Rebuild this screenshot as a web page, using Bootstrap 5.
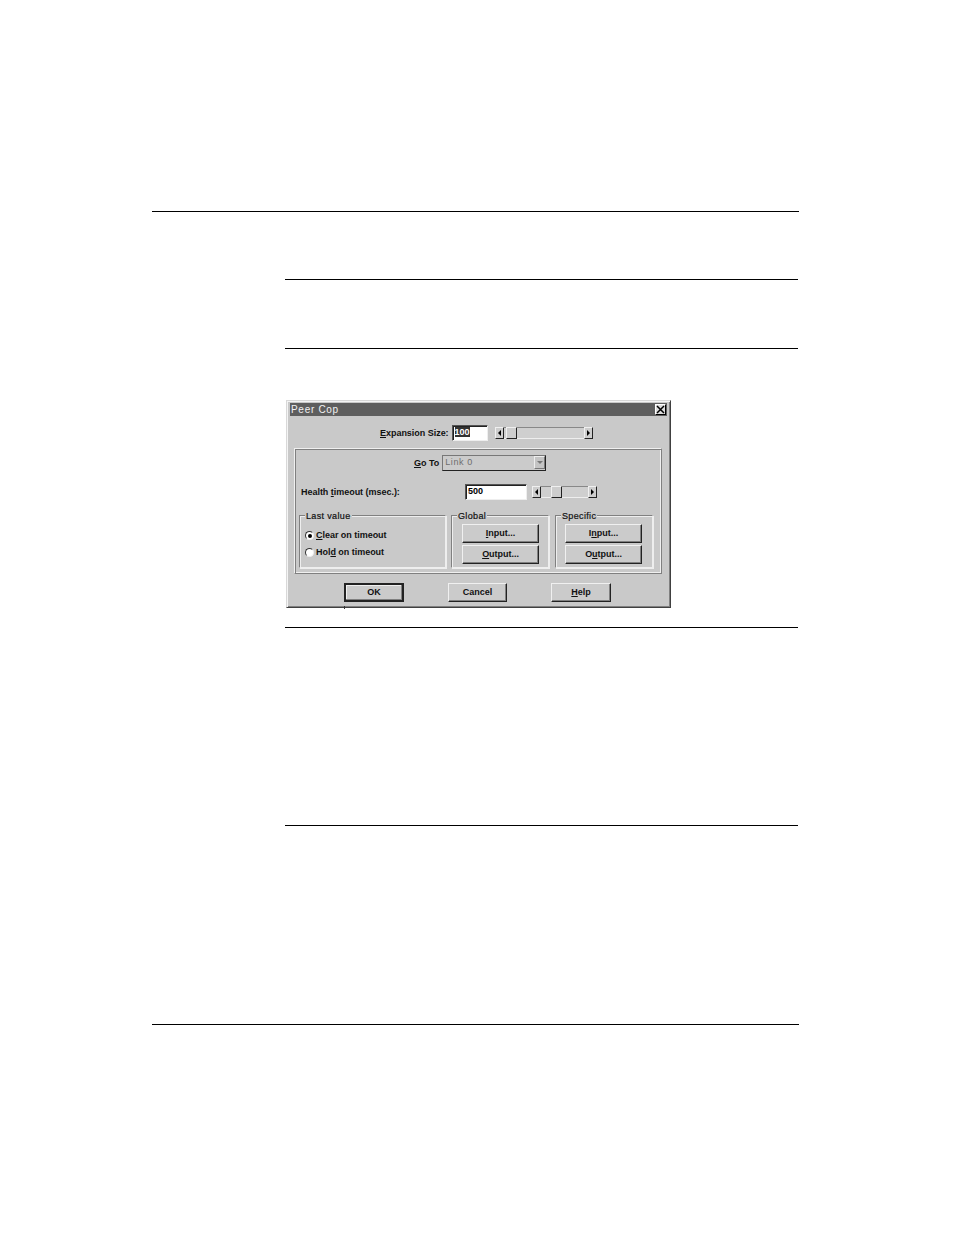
<!DOCTYPE html>
<html lang="en">
<head>
<meta charset="utf-8">
<title>Peer Cop</title>
<link href="https://cdn.jsdelivr.net/npm/bootstrap@5.3.0/dist/css/bootstrap.min.css" rel="stylesheet">
<style>
body{background:#fff;margin:0}
.sheet{padding:211px 155px 0 152px;height:1235px;overflow:hidden}
.rule-wide{border-top:1px solid #000}
.rule-in{border-top:1px solid #000;height:1px}
.col-area{margin-left:133px;margin-right:1px}
.gap-a{margin-top:67px}.gap-b{margin-top:68px}.gap-c{margin-top:19px}.gap-d{margin-top:197px}.gap-e{margin-top:198px}
.dlg{position:relative;width:385px;height:208px;margin:51px 0 0 1px;background:#c9c9c9;border:1px solid;border-color:#d8d8d8 #404040 #404040 #d8d8d8;box-shadow:inset 1px 1px 0 #f4f4f4,inset -1px -1px 0 #808080;padding:2px 3px 3px;font-family:"Liberation Sans",Arial,sans-serif;font-size:9px;font-weight:700;color:#111;letter-spacing:-.03px;line-height:12px}
.tick{position:absolute;left:57px;top:205px;width:1px;height:3px;background:#333}
.ttl{height:13px;background:#5e5e5e;color:#f2f2f2;font-size:10px;font-weight:400;letter-spacing:.7px;padding-left:1px;line-height:13px}
.xbtn{width:11px;height:11px;margin:1px 1px 0 0;background:#ddd;border:1px solid;border-color:#fff #000 #000 #fff}
.xbtn svg{display:block}
.row-exp{height:32px;padding:9px 0 0 90px}
.lbl{padding-top:2px}
.lbl u{text-underline-offset:1px}
.sunken{background:#fff;border:1px solid;border-color:#555 #eee #eee #555;box-shadow:inset 1px 1px 0 #222;color:#000;line-height:12px;padding:0 0 0 2px}
.f-exp{width:36px;height:16px;margin-left:3px}
.f-exp span{background:#333;color:#fff}
.sbar{display:flex;height:12px;background:#cfcfcf;border-top:1px solid #888;border-bottom:1px solid #eee}
.sb-e{width:98px;margin:2px 0 0 7px}
.sb-h{width:65px;margin:2px 0 0 5px}
.arr,.thb{display:flex;align-items:center;justify-content:center;background:#cdcdcd;border:1px solid;border-color:#f0f0f0 #222 #222 #f0f0f0;height:12px;margin-top:-1px;flex:none}
.arr{width:9px}
.thb{width:11px}
.tri-l{width:0;height:0;border:3px solid transparent;border-left:0;border-right:3px solid #000}
.tri-r{width:0;height:0;border:3px solid transparent;border-right:0;border-left:3px solid #000}
.tri-d{width:0;height:0;border:3px solid transparent;border-bottom:0;border-top:3px solid #777}
.sp-e{width:2px}
.sp-h{width:10px}
.panel{margin:0 5px 0 4px;height:126px;border:1px solid;border-color:#f0f0f0 #808080 #808080 #f0f0f0;box-shadow:inset 1px 1px 0 #808080,inset -1px -1px 0 #f0f0f0;padding:0 4px 0 4px}
.row-go{height:30px;padding:6px 0 0 115px}
.combo{width:104px;height:16px;margin-left:3px;background:#cbcbcb;border:1px solid;border-color:#777 #222 #222 #777;color:#6e6e6e;font-weight:400;padding-left:2px;line-height:13px;letter-spacing:.6px}
.combo .dd{width:11px;height:13px;background:#c4c4c4;border:1px solid;border-color:#eee #777 #777 #eee}
.row-hl{height:30px;padding:5px 0 0 2px}
.row-hl .lbl{width:164px}
.f-hl{width:62px;height:16px}
.grp-wrap{gap:5px;margin-top:6px}
.grp{position:relative;height:53px;border:1px solid;border-color:#808080 #eee #eee #808080;box-shadow:1px 1px 0 #eee,inset 1px 1px 0 #eee}
.grp-a{width:147px;padding:11px 0 0 5px}
.grp-b{width:98px;padding:8px 0 0 10px}
.grp-c{width:98px;padding:8px 0 0 9px;margin-left:1px}
.cap{position:absolute;left:5px;top:-6px;background:#c9c9c9;padding:0 1px;font-weight:400;letter-spacing:.35px;-webkit-text-stroke:.2px #111}
.radio-ln{height:17px;line-height:13px}
.rdo{width:9px;height:9px;border-radius:50%;background:#fff;border:1px solid;border-color:#333 #eee #eee #333;margin-right:2px;display:flex;align-items:center;justify-content:center}
.rdo i{width:4px;height:4px;border-radius:50%;background:#000;display:block}
.wbtn{display:flex;align-items:center;justify-content:center;background:#cbcbcb;border:1px solid;border-color:#f0f0f0 #222 #222 #f0f0f0;box-shadow:inset -1px -1px 0 #808080;color:#111;padding:0 0 2px}
.b-g{width:77px;height:19px;margin-bottom:2px}
.foot{padding:9px 0 0 54px;gap:44px}
.b-f{width:60px;height:19px}
.b-n{width:59px}
.b-d{border:2px solid;border-color:#222;box-shadow:inset -1px -1px 0 #808080,inset 1px 1px 0 #f0f0f0}
</style>
</head>
<body>
<div class="sheet">
  <div class="rule-wide"></div>
  <div class="col-area">
    <div class="rule-in gap-a"></div>
    <div class="rule-in gap-b"></div>
    <div class="dlg">
      <div class="ttl d-flex justify-content-between"><span>Peer Cop</span>
        <span class="xbtn"><svg width="9" height="9" viewBox="0 0 9 9"><path d="M1 1l7 7M8 1l-7 7" stroke="#000" stroke-width="1.5"/></svg></span></div>
      <div class="row-exp d-flex align-items-start">
        <span class="lbl"><u>E</u>xpansion Size:</span>
        <div class="sunken f-exp"><span>100</span></div>
        <div class="sbar sb-e"><div class="arr"><i class="tri-l"></i></div><div class="sp-e"></div><div class="thb"></div><div class="flex-grow-1"></div><div class="arr"><i class="tri-r"></i></div></div>
      </div>
      <div class="panel">
        <div class="row-go d-flex align-items-start">
          <span class="lbl"><u>G</u>o To</span>
          <div class="combo d-flex justify-content-between"><span>Link 0</span><span class="dd d-flex align-items-center justify-content-center"><i class="tri-d"></i></span></div>
        </div>
        <div class="row-hl d-flex align-items-start">
          <span class="lbl">Health <u>t</u>imeout (msec.):</span>
          <div class="sunken f-hl">500</div>
          <div class="sbar sb-h"><div class="arr"><i class="tri-l"></i></div><div class="sp-h"></div><div class="thb"></div><div class="flex-grow-1"></div><div class="arr"><i class="tri-r"></i></div></div>
        </div>
        <div class="grp-wrap d-flex">
          <div class="grp grp-a">
            <span class="cap">Last value</span>
            <div class="radio-ln d-flex align-items-center"><span class="rdo"><i></i></span><span><u>C</u>lear on timeout</span></div>
            <div class="radio-ln d-flex align-items-center"><span class="rdo"></span><span>Hol<u>d</u> on timeout</span></div>
          </div>
          <div class="grp grp-b">
            <span class="cap">Global</span>
            <div class="wbtn b-g"><span><u>I</u>nput...</span></div>
            <div class="wbtn b-g"><span><u>O</u>utput...</span></div>
          </div>
          <div class="grp grp-c">
            <span class="cap">Specific</span>
            <div class="wbtn b-g"><span>I<u>n</u>put...</span></div>
            <div class="wbtn b-g"><span>O<u>u</u>tput...</span></div>
          </div>
        </div>
      </div>
      <div class="foot d-flex">
        <div class="wbtn b-f b-d">OK</div>
        <div class="wbtn b-f b-n">Cancel</div>
        <div class="wbtn b-f"><span><u>H</u>elp</span></div>
      </div>
      <span class="tick"></span>
    </div>
    <div class="rule-in gap-c"></div>
    <div class="rule-in gap-d"></div>
  </div>
  <div class="rule-wide gap-e"></div>
</div>
<script src="https://cdn.jsdelivr.net/npm/bootstrap@5.3.0/dist/js/bootstrap.bundle.min.js"></script>
</body>
</html>
